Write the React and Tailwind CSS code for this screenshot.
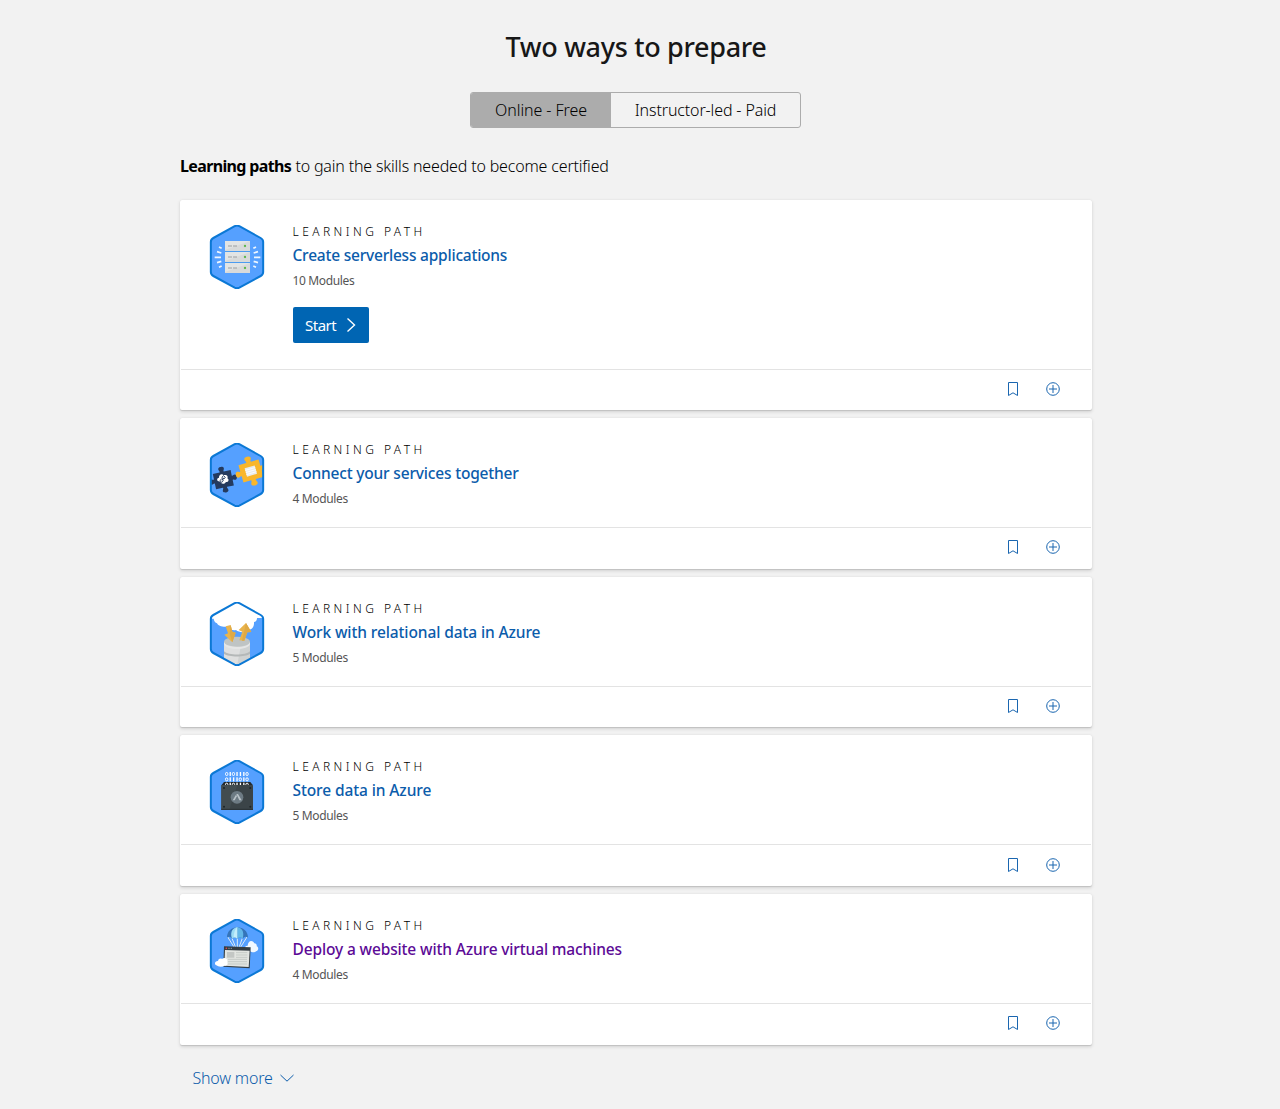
import React from "react";

const HEX =
  "M104 33.5Q111 30 118 33.5L182 69Q189.500 73 189.500 81V171Q189.500 179 182 183L118 218Q111 221.500 104 218L40 183Q32.500 179 32.500 171V81Q32.500 73 40 69Z";

function Badge({ id, children }) {
  return (
    <svg viewBox="15 30 192 192" className="size-16 shrink-0" aria-hidden="true">
      <clipPath id={id}>
        <path d={HEX} />
      </clipPath>
      <path d={HEX} fill="#55a0ff" />
      <g clipPath={`url(#${id})`}>{children}</g>
      <path d={HEX} fill="none" stroke="#0b78d5" strokeWidth="6" />
    </svg>
  );
}

function ServerArt() {
  return (
    <Badge id="hex-servers">
      {[78, 111, 144].map((y) => (
        <g key={y}>
          <rect x="75" y={y} width="75" height="30" fill="#d8dada" />
          <path d={`M75 ${y}H150L75 ${y + 27}Z`} fill="#e2e4e4" />
          <path d={`M84 ${y + 15}H96M99 ${y + 15}H111`} stroke="#9a9ea0" strokeWidth="3" />
          <circle cx="135" cy={y + 15} r="3.500" fill="#5cb84c" />
        </g>
      ))}
      <path d="M75 109.500H150M75 142.500H150" stroke="#4b9cf0" strokeWidth="3" />
      <path
        d="M57 96L65 100M51 110L64 114M44 127H63M51 143L64 139M57 157L65 153M168 96L160 100M174 110L161 114M181 127H162M174 143L161 139M168 157L160 153"
        stroke="#eef6ff"
        strokeWidth="5"
      />
    </Badge>
  );
}

const PUZZLE =
  "M-29 -25H-7C-4 -28 -10 -31 -9 -37C-7 -43 7 -43 9 -37C10 -31 4 -28 7 -25H29V-7C32 -4 35 -10 40 -8C45 -6 45 6 40 8C35 10 32 4 29 7V25H7C4 28 10 31 9 37C7 43 -7 43 -9 37C-10 31 -4 28 -7 25H-29V7C-32 4 -35 10 -40 8C-45 6 -45 -6 -40 -8C-35 -10 -32 -4 -29 -7Z";

function PuzzleArt() {
  return (
    <Badge id="hex-puzzle">
      <g transform="translate(70 140) rotate(-12) scale(.94)">
        <path d={PUZZLE} fill="#243a5e" />
      </g>
      <path
        d="M56 145C49 143 51 134 57 134C56 125 66 120 71 127C78 123 86 129 82 136C89 140 85 149 78 147C73 155 63 153 62 148Z"
        fill="#fff"
      />
      <path
        d="M66 132L71 128L76 133L72 138L67 136ZM60 142L65 138L70 142L66 148L60 146ZM66 142L72 134"
        fill="none"
        stroke="#243a5e"
        strokeWidth="2.500"
      />
      <g transform="translate(153 114) rotate(-16) scale(1.08)">
        <path d={PUZZLE} fill="#f9b62b" />
        <rect x="-15" y="-12" width="29" height="24" fill="#e9ecee" />
        <path d="M-15 -6H14M-15 0H14M-15 6H14" stroke="#fff" strokeWidth="2" />
      </g>
    </Badge>
  );
}

function DatabaseArt() {
  return (
    <Badge id="hex-database">
      <path
        d="M30 30H192V78H171C171 87 166 89 162 90C163 106 155 112 147 113C140 124 116 122 108 114C98 116 87 112 83 104C67 106 54 101 51 94C43 91 42 84 41 80H30Z"
        fill="#fff"
      />
      <path d="M72 151V208C86 224 136 224 150 208V151Z" fill="#cfd2d2" />
      <path d="M72 151V208C80 218 98 221 111 221L122 165Z" fill="#dedfdf" />
      <path d="M72 178C86 191 136 191 150 178V185C136 196 86 196 72 185Z" fill="#b4b8b8" />
      <ellipse cx="111" cy="149" rx="39" ry="15" fill="#bfc4c4" />
      <path d="M72 149C74 170 148 170 150 149V156C146 176 76 176 72 156Z" fill="#e5e6e6" />
      <path d="M77 103L92 99L97 119L107 122L97 151L73 128L84 124Z" fill="#e9b44c" />
      <path d="M138 93L154 120L142 121L133 146L118 145L127 119L116 114Z" fill="#e9b44c" />
      <path d="M92 99L97 119L107 122L97 151L89 125ZM138 93L154 120L142 121L133 146L126 146Z" fill="#dfa945" />
    </Badge>
  );
}

const BIT_ROWS = [
  { y: 72, bits: "0101110" },
  { y: 88, bits: "0111010" },
  { y: 104, bits: "0101110" },
];

function StorageArt() {
  return (
    <Badge id="hex-storage">
      <path d="M72 96H151L159 106H64Z" fill="#242a2e" />
      {BIT_ROWS.map(({ y, bits }) =>
        bits.split("").map((bit, i) =>
          bit === "0" ? (
            <rect key={`${y}-${i}`} x={76.5 + i * 10.2} y={y - 4.5} width="7" height="9" rx="3.500" fill="none" stroke="#fff" strokeWidth="3" />
          ) : (
            <rect key={`${y}-${i}`} x={78.5 + i * 10.2} y={y - 6} width="4" height="12" fill="#fff" />
          )
        )
      )}
      <rect x="64" y="105" width="95" height="75" rx="2" fill="#3b4448" />
      <path d="M64 105H112L88 180H64Z" fill="#424c50" />
      <path d="M64 176H159V180H64Z" fill="#2c3438" />
      <g fill="#1e2529">
        <circle cx="72" cy="114" r="3" />
        <circle cx="151" cy="114" r="3" />
        <circle cx="72" cy="170" r="3" />
        <circle cx="151" cy="170" r="3" />
      </g>
      <circle cx="111" cy="142" r="19" fill="#6d7b84" />
      <path d="M98 151L108 134L111 139L104 151ZM109 132H114L125 151H118Z" fill="#b9c2c8" />
    </Badge>
  );
}

function WebsiteArt() {
  return (
    <Badge id="hex-website">
      <path
        d="M137 126C131 118 136 109 143 110C144 93 158 92 163 103C170 104 171 109 170 112C177 114 176 126 168 127C165 131 155 131 151 127Z"
        fill="#f3f9ff"
      />
      <path d="M83 84L102 114M96 88L107 115M112 88V115M127 88L117 115M141 84L122 114" fill="none" stroke="#dcebf7" strokeWidth="3" />
      <path d="M81 86C80 44 144 44 144 86C138 81 132 82 128 89C124 84 117 84 112 89C107 84 100 84 96 89C92 82 86 81 81 86Z" fill="#3574b9" />
      <path d="M112 54C93 58 91 74 96 89C100 84 107 84 112 89Z" fill="#9bdcf5" />
      <path d="M112 54C131 58 132 74 128 89C124 84 117 84 112 89Z" fill="#62b7e8" />
      <path d="M112 54V89C107 84 103 84 101 86C101 74 104 61 112 54Z" fill="#c3edfa" />
      <path d="M72 112L152 115L149 178L70 173Z" fill="#343d43" />
      <path d="M75 123L149 125L146 174L73 170Z" fill="#e2e5e1" />
      <path d="M81 129H103V146H81Z" fill="#c3c7c4" />
      <path d="M108 131H142M108 138H142M108 145H142M84 151H141M84 158H141M84 165H141" stroke="#bfc5c2" strokeWidth="2.500" />
      <circle cx="79" cy="118" r="2.500" fill="#e54b4b" />
      <path d="M85 118H99" stroke="#8c989f" strokeWidth="3" strokeDasharray="4 3" />
      <path
        d="M49 169C41 165 46 155 54 156C55 149 62 147 66 150C73 143 84 148 82 159C84 168 79 171 74 170C67 174 55 174 49 169Z"
        fill="#fff"
      />
    </Badge>
  );
}

function BookmarkIcon() {
  return (
    <svg viewBox="0 0 16 16" className="size-4" fill="none" stroke="currentColor">
      <path d="M3.500 1.500H12.500V14.500L8 11.800L3.500 14.500Z" />
    </svg>
  );
}

function AddIcon() {
  return (
    <svg viewBox="0 0 16 16" className="size-4" fill="none" stroke="currentColor">
      <circle cx="8" cy="8" r="6.300" />
      <path d="M4 8H12M8 4V12" />
    </svg>
  );
}

const paths = [
  { title: "Create serverless applications", modules: 10, Art: ServerArt, start: true, tracking: "tracking-[-0.220px]" },
  { title: "Connect your services together", modules: 4, Art: PuzzleArt, tracking: "tracking-[-0.180px]" },
  { title: "Work with relational data in Azure", modules: 5, Art: DatabaseArt, tracking: "tracking-[-0.110px]" },
  { title: "Store data in Azure", modules: 5, Art: StorageArt, tracking: "tracking-[-0.110px]" },
  { title: "Deploy a website with Azure virtual machines", modules: 4, Art: WebsiteArt, visited: true, tracking: "tracking-[-0.140px]" },
];

function PathCard({ title, modules, Art, start, visited, tracking }) {
  return (
    <article className="rounded-[2px] bg-white shadow-[0_1.600px_3.600px_rgba(0,0,0,0.13),0_0.300px_0.900px_rgba(0,0,0,0.11)]">
      <div className={start ? "flex h-[168.600px] pt-[25px] pl-[25px]" : "flex h-[109px] pt-[25px] pl-[25px]"}>
        <Art />
        <div className="ml-[23.500px] flex flex-col items-start whitespace-nowrap">
          <p className="-mt-px h-4 text-[12px] leading-4 font-light tracking-[3.450px] text-black">LEARNING PATH</p>
          <a
            href="#"
            className={`mt-[3px] text-[15.500px] leading-6 font-[550] ${tracking} ${visited ? "text-[#5c0a96]" : "text-[#0b5cab]"}`}
          >
            {title}
          </a>
          <p className="mt-[6px] text-[12px] leading-4 tracking-[-0.350px] text-[#555]">{modules} Modules</p>
          {start && (
            <button className="mt-[18px] flex h-9 w-[76px] items-center rounded-[2px] bg-[#0065b3] pl-[12.500px] text-[15px] tracking-[-0.500px] text-white">
              <span className="w-[37.500px] text-left">Start</span>
              <svg viewBox="0 0 16 16" className="size-4" fill="none" stroke="currentColor" strokeWidth="1.400">
                <path d="M4.500 1.500L11.500 8L4.500 14.500" />
              </svg>
            </button>
          )}
        </div>
      </div>
      <footer className="mx-px flex h-[41.600px] items-center justify-end gap-6 border-t border-[#e3e3e3] pr-[29.600px] pb-[2px] text-[#1a66b0]">
        <button aria-label="Bookmark"><BookmarkIcon /></button>
        <button aria-label="Add"><AddIcon /></button>
      </footer>
    </article>
  );
}

export default function App() {
  return (
    <div className="min-h-[1109px] bg-[#f2f2f2] font-['Noto_Sans','Open_Sans',sans-serif] text-[#171717]">
      <main className="ml-[180px] w-[912px] pt-[27px]">
        <h2 className="h-10 text-center text-[27px] leading-10 font-[550] tracking-[-0.320px]">Two ways to prepare</h2>
        <div className="mt-[25px] ml-[290px] flex h-9 w-[331px] overflow-hidden rounded-[3px] border border-[#acacac] text-base font-light text-black">
          <button className="w-[140px] bg-[#acacac] tracking-[-0.080px]">Online - Free</button>
          <button className="flex-1 tracking-[-0.130px]">Instructor-led - Paid</button>
        </div>
        <p className="mt-[26px] h-6 text-base leading-6 font-light whitespace-nowrap text-black">
          <span className="font-bold tracking-[-0.640px]">Learning paths</span>{" "}
          <span className="tracking-[-0.170px]">to gain the skills needed to become certified</span>
        </p>
        <section className="mt-[22px] flex flex-col gap-2">
          {paths.map((p) => (
            <PathCard key={p.title} {...p} />
          ))}
        </section>
        <button className="mt-[21.400px] ml-[12.500px] flex h-6 items-center text-base font-light text-[#0b5cab]">
          <span className="w-[86.500px] text-left tracking-[-0.200px]">Show more</span>
          <svg viewBox="0 0 16 16" className="size-4" fill="none" stroke="currentColor">
            <path d="M1.500 5L8 11.200L14.500 5" />
          </svg>
        </button>
      </main>
    </div>
  );
}
